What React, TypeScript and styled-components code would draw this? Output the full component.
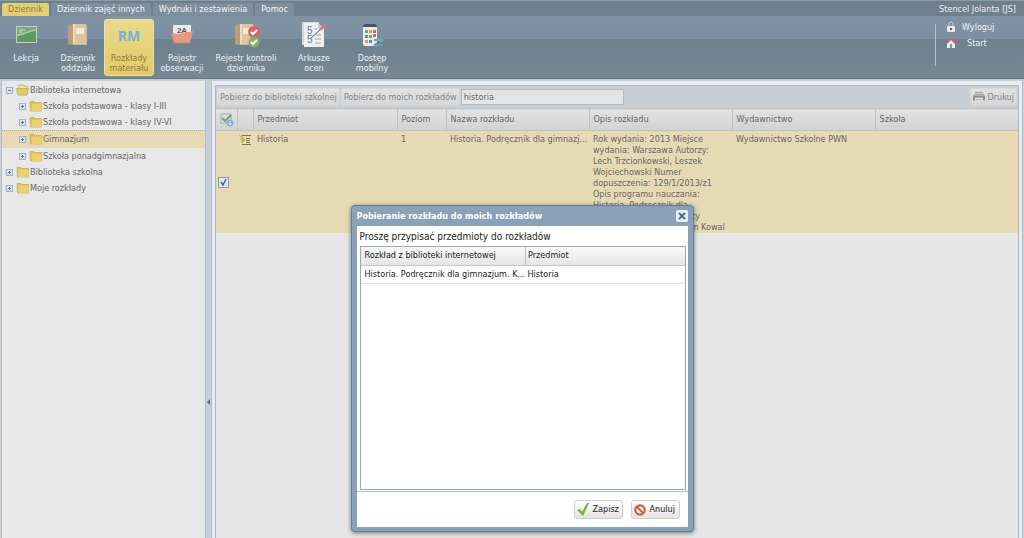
import React from "react";
import styled, { createGlobalStyle, css } from "styled-components";

const uiFont = '"DejaVu Sans Condensed", "DejaVu Sans", Tahoma, sans-serif';

const GlobalStyle = createGlobalStyle`
  * { box-sizing: border-box; }
  body {
    margin: 0;
    background: #c9d0d7;
    color: #666;
    font: 9px/11px ${uiFont};
  }
  button, input { font: inherit; color: inherit; margin: 0; }
  button { border: 0; padding: 0; background: none; cursor: pointer; }
  ul { list-style: none; margin: 0; padding: 0; }
  svg { display: block; flex: none; }
`;

const Page = styled.div`
  display: flex;
  flex-direction: column;
  min-height: 100vh;
`;

/* ---------- top bar ---------- */

const TopBar = styled.div`
  display: flex;
  justify-content: space-between;
  align-items: flex-end;
  height: 16px;
  padding: 0 8px 0 2px;
  background: #6e7f8e;
  border-top: 1px solid #8c9aa8;
  color: #eef1f3;
`;

const Tabs = styled.nav`
  display: flex;
  gap: 2px;
`;

const Tab = styled.button<{ $active?: boolean }>`
  height: 13px;
  padding: 0 6px;
  white-space: nowrap;
  border-radius: 2px 2px 0 0;
  background: ${(p) => (p.$active ? "#e5cf72" : "#7d8f9f")};
  color: ${(p) => (p.$active ? "#8a7c46" : "#f3f5f7")};
`;

const UserName = styled.span`
  line-height: 13px;
`;

const Ribbon = styled.header`
  display: flex;
  justify-content: space-between;
  height: 63px;
  padding: 3px 0 2px;
  background: linear-gradient(#8194a5 0, #7b8fa0 23px, #6e818f 23px, #758894 100%);
  border-bottom: 1px solid #65778a;
  color: #f0f3f5;
`;

const RibbonItems = styled.div`
  display: flex;
`;

const RibbonButton = styled.button<{ $width: number; $active?: boolean }>`
  display: flex;
  flex-direction: column;
  align-items: center;
  justify-content: flex-start;
  gap: 4px;
  width: ${(p) => p.$width}px;
  padding-top: 3px;
  line-height: 10px;
  text-align: center;
  white-space: pre-line;
  border-radius: 3px;
  ${(p) =>
    p.$active &&
    css`
      background: linear-gradient(#ead98c, #e3cb66);
      border: 1px solid #ece0a8;
      color: #8a7c46;
      padding-top: 2px;
    `}
`;

const Session = styled.div`
  display: flex;
  flex-direction: column;
  gap: 4px;
  width: 89px;
  height: 42px;
  margin-top: 5px;
  padding-left: 9px;
  border-left: 1px solid #b7c1ca;
`;

const SessionLink = styled.a<{ $indent?: boolean }>`
  display: flex;
  align-items: center;
  gap: ${(p) => (p.$indent ? 10 : 5)}px;
  height: 12px;
  margin-top: ${(p) => (p.$indent ? 0 : "-3px")};
  color: #f0f3f5;
  text-decoration: none;
`;

/* ---------- body ---------- */

const Main = styled.main`
  display: flex;
  flex: 1;
  border-top: 2px solid #c3ccd3;
  padding: 0 1px;
`;

const Sidebar = styled.aside`
  flex: none;
  width: 205px;
  padding-top: 1px;
  background: #e8e8e8;
  border: solid #b3bdca;
  border-width: 0 1px;
`;

const TreeRow = styled.li<{ $level: number; $selected?: boolean }>`
  display: flex;
  align-items: center;
  gap: 3px;
  height: 16px;
  padding-left: ${(p) => 4 + p.$level * 13}px;
  white-space: nowrap;
  ${(p) =>
    p.$selected &&
    css`
      height: 18px;
      background: #e6dab4;
      border-top: 1px dotted #b5ab8c;
      border-bottom: 1px solid #e6dab4;
    `}
`;

const TreeLabel = styled.span`
  margin-left: -2px;
`;

const Splitter = styled.div`
  flex: none;
  width: 5px;
  padding: 318px 1px 0;
  background: #c6ced9;
`;

const Content = styled.section`
  flex: 1;
  min-width: 0;
  display: flex;
  flex-direction: column;
  padding: 4px 3px 0;
  background: #e8ebef;
  border: solid #b3bdca;
  border-width: 0 1px;
`;

const GridPanel = styled.div`
  flex: 1;
  background: #e6e6e6;
  border: 1px solid #b0b8c0;
  border-bottom: 0;
`;

const Toolbar = styled.div`
  display: flex;
  align-items: center;
  gap: 1px;
  height: 22px;
  padding: 0 1px;
  background: #c7ced5;
`;

const ToolButton = styled.button`
  display: flex;
  align-items: center;
  gap: 3px;
  height: 18px;
  padding: 0 2px;
  white-space: nowrap;
  color: #858585;
  background: linear-gradient(#e2e2e2, #d6d6d6);
  border: 1px solid #d6d9dc;
  border-radius: 2px;
`;

const SearchInput = styled.input`
  width: 163px;
  height: 16px;
  padding: 0 2px;
  background: #e4e4e4;
  border: 1px solid #b5babf;
  border-radius: 0;
  outline: 0;
`;

const Spacer = styled.div`
  flex: 1;
`;

const Table = styled.table`
  width: 100%;
  table-layout: fixed;
  border-collapse: collapse;
`;

const HeadCell = styled.th`
  height: 22px;
  padding: 0 4px;
  font-weight: normal;
  text-align: left;
  white-space: nowrap;
  background: linear-gradient(#e2e2e2, #d2d2d2);
  border: solid #bfc2c5;
  border-width: 1px 0 1px 1px;
  &:first-child { border-left: 0; }
`;

const Cell = styled.td<{ $middle?: boolean; $tight?: boolean }>`
  height: 102px;
  padding: ${(p) => (p.$tight ? "3px 2px" : "3px 0 0 4px")};
  vertical-align: ${(p) => (p.$middle ? "middle" : "top")};
  background: #e6dab4;
`;

const OneLine = styled.div`
  overflow: hidden;
  white-space: nowrap;
  text-overflow: ellipsis;
`;

const Lines = styled.div`
  white-space: pre;
`;

const Check = styled.input`
  appearance: none;
  display: block;
  width: 11px;
  height: 11px;
  background: #e3e6ec;
  border: 1px solid #8d9bb5;
`;

const CheckLabel = styled.label`
  display: grid;
  width: 11px;
  > * { grid-area: 1 / 1; }
`;

/* ---------- dialog ---------- */

const Overlay = styled.div`
  position: absolute;
  inset: 0;
  display: flex;
  justify-content: center;
  align-items: flex-start;
  padding: 205px 0 0 20px;
`;

const Dialog = styled.div`
  width: 343px;
  padding: 0 5px 4px;
  background: #8aa1b7;
  border: 1px solid #60809f;
  border-radius: 4px;
  box-shadow: 0 1px 4px rgba(0, 0, 0, 0.5);
  color: #222;
`;

const DialogTitle = styled.h2`
  display: flex;
  align-items: center;
  justify-content: space-between;
  height: 20px;
  margin: 0;
  padding: 0;
  font-size: 9px;
  line-height: 11px;
  color: #fff;
`;

const CloseButton = styled.button`
  display: flex;
  align-items: center;
  justify-content: center;
  width: 12px;
  height: 12px;
  background: #e9f1fb;
  border-radius: 2px;
`;

const DialogBody = styled.div`
  padding: 4px 2px 1px 3px;
  background: #fff;
`;

const Prompt = styled.p`
  margin: 0 0 2px;
  font-size: 10px;
  line-height: 14px;
`;

const SubjectList = styled.div`
  height: 244px;
  border: 1px solid #9aa9b8;
`;

const SubjectHead = styled.th`
  height: 18px;
  padding: 0 4px;
  font-weight: normal;
  text-align: left;
  white-space: nowrap;
  background: linear-gradient(#f8f8f8, #e6e6e7);
  border-bottom: 1px solid #c5c5c5;
  & + & { border-left: 1px solid #b9bec4; padding-left: 2px; }
`;

const SubjectCell = styled.td`
  height: 18px;
  padding: 0 0 0 4px;
  border-bottom: 1px solid #dedede;
  & + & { padding-left: 2px; }
`;

const DialogFooter = styled.div`
  display: flex;
  justify-content: flex-end;
  gap: 8px;
  height: 36px;
  padding: 8px 8px 0;
  background: #fff;
  border-top: 1px solid #b4c2d0;
`;

const DialogButton = styled.button`
  display: flex;
  align-items: center;
  gap: 4px;
  width: 49px;
  height: 19px;
  padding: 0 2px;
  background: linear-gradient(#fff, #e3e3e3);
  border: 1px solid #cfcfcf;
  border-radius: 3px;
`;

/* ---------- icons ---------- */

const BoardIcon = () => (
  <svg width="26" height="27" viewBox="0 0 26 27">
    <rect x="3" y="4" width="21" height="17" fill="#c9cdc9" />
    <rect x="4" y="5" width="19" height="15" fill="#78aa78" />
    <path d="M4 15c6-1 11-5 19-6v11H4z" fill="#5b9a62" />
    <path d="M4 13c6 0 10-4 19-5" stroke="#a9cf9f" fill="none" strokeWidth="1.500" />
    <path d="M6 8h6M6 10h3" stroke="#cfe0cd" />
  </svg>
);

const Book = () => (
  <>
    <path d="M3 3l5-1v21l-5-1z" fill="#bf9c78" />
    <rect x="8" y="2" width="13" height="21" fill="#dcc6a0" />
    <path d="M8 2h2v21H8z" fill="#e8dcc2" />
    <path d="M21 3h1v20H8v-1h13z" fill="#c9b394" />
    <rect x="11" y="6" width="8" height="6" fill="#f1ead9" />
  </>
);

const BookIcon = () => (
  <svg width="26" height="27" viewBox="0 0 26 27">
    <Book />
  </svg>
);

const PlanIcon = () => (
  <svg width="26" height="27" viewBox="0 0 26 27">
    <text x="13" y="19" textAnchor="middle" fontFamily="Open Sans, sans-serif" fontWeight="bold" fontSize="14" fill="#74b3d3">
      RM
    </text>
  </svg>
);

const FolderReportIcon = () => (
  <svg width="26" height="27" viewBox="0 0 26 27">
    <path d="M4 3h18v14H4z" fill="#ececec" />
    <text x="13" y="11" textAnchor="middle" fontFamily="Liberation Sans, sans-serif" fontWeight="bold" fontSize="8" fill="#555">
      2A
    </text>
    <path d="M2 12l2-1 5 1 5-1 10-2-3 12H5z" fill="#e89a80" />
    <path d="M2 12l3 9h15" fill="none" stroke="#d07a62" />
  </svg>
);

const ControlIcon = () => (
  <svg width="28" height="27" viewBox="0 0 28 27">
    <Book />
    <circle cx="22" cy="10" r="6" fill="#d9636a" />
    <path d="M19 10l2 2 4-4" stroke="#fff" strokeWidth="2" fill="none" />
    <circle cx="22" cy="20" r="5.500" fill="#7fb35c" />
    <path d="M19 20l2 2 4-4" stroke="#fff" strokeWidth="2" fill="none" />
  </svg>
);

const SheetIcon = () => (
  <svg width="28" height="27" viewBox="0 0 28 27">
    <path d="M2 0h17v23H2z" fill="#d6d9dc" />
    <path d="M4 1h14l6 6v18H4z" fill="#eef0f1" />
    <path d="M18 1v6h6" fill="#c9ced3" />
    <g fontFamily="Liberation Sans, sans-serif" fontSize="10" fill="#5a79a8">
      <text x="7" y="12">5</text>
      <text x="7" y="21">5</text>
    </g>
    <path d="M14 7h3M16 13h5M15 17h6M15 21h6" stroke="#a4abb1" />
    <path d="M11 16l10-9" stroke="#555" />
    <path d="M19 7l6-6 2 1-6 7z" fill="#cf7a82" />
  </svg>
);

const MobileIcon = () => (
  <svg width="26" height="27" viewBox="0 0 26 27">
    <rect x="4" y="2" width="14" height="22" rx="2" fill="#e9ebed" />
    <path d="M4 4q0-2 2-2h10q2 0 2 2v1H4z" fill="#4b5560" />
    <path d="M6 8h3v3H6zM10 13h3v3h-3z" fill="#7fa85d" />
    <path d="M10 8h3v3h-3zM6 18h3v3H6z" fill="#d3a24f" />
    <path d="M14 8h3v3h-3zM14 12h3v3h-3z" fill="#cb6868" />
    <path d="M6 13h3v3H6zM10 18h3v3h-3z" fill="#5f8fc0" />
    <path d="M15 17h6v-2l4 3-4 3v-2h-6z" fill="#63b79c" />
    <path d="M24 24h-6v1l-4-2 4-3v2h6z" fill="#7398c6" />
  </svg>
);

const LockIcon = () => (
  <svg width="12" height="12" viewBox="0 0 12 12">
    <path d="M4 6V3q0-2 2-2t2 2v3" fill="none" stroke="#c6ccd1" />
    <rect x="2" y="5" width="8" height="6" rx="1" fill="#e5e8ea" />
    <path d="M6 7v2" stroke="#54606b" strokeWidth="2" />
  </svg>
);

const HomeIcon = () => (
  <svg width="12" height="12" viewBox="0 0 12 12">
    <path d="M8 1h2v4H8z" fill="#cf5f62" />
    <path d="M2 6l4-4 4 4v5H2z" fill="#eceef0" />
    <path d="M1 7l5-5 5 5" fill="none" stroke="#cf5f62" strokeWidth="1.500" />
    <path d="M5 7h2v4H5z" fill="#8b949c" />
  </svg>
);

const Expander = ({ open }: { open?: boolean }) => (
  <svg width="7" height="7" viewBox="0 0 7 7">
    <rect x=".5" y=".5" width="6" height="6" fill="#dfe4ec" stroke="#a3afc3" />
    <path d={open ? "M2 3.500h3" : "M2 3.500h3M3.500 2v3"} stroke="#5f7194" />
  </svg>
);

const FolderIcon = ({ open }: { open?: boolean }) => (
  <svg width="13" height="12" viewBox="0 0 13 12">
    {open ? (
      <>
        <path d="M3 1h4l1 1h3v4H3z" fill="#f0e6bb" stroke="#b69d4a" strokeWidth=".7" />
        <path d="M.5 4.500h12l-1.500 6.500H2z" fill="#e6cb60" stroke="#b69d4a" strokeWidth=".7" />
      </>
    ) : (
      <>
        <path d="M1 1.500h4l1 1h6.500v8.500H1.500z" fill="#dcc05a" stroke="#c3a955" strokeWidth=".7" />
        <path d="M2.500 3.500H12.500V11H2.500z" fill="#ead26f" />
      </>
    )}
  </svg>
);

const SelectAllIcon = () => (
  <svg width="14" height="14" viewBox="0 0 14 14">
    <rect x="1" y="1" width="10" height="9" fill="#dde3dc" stroke="#a3b0a8" />
    <path d="M2 5l3 3 6-6" fill="none" stroke="#6fa566" strokeWidth="2" />
    <circle cx="10" cy="10" r="3.500" fill="#7fb2cf" />
    <path d="M10 8v3M8.500 10l1.500 2 1.500-2" stroke="#e8eef2" fill="none" />
  </svg>
);

const DetailsIcon = () => (
  <svg width="12" height="12" viewBox="0 0 12 12">
    <path d="M3 1.500h9M7 4.500h4M7 6.500h4M7 8.500h4M3 10.500h9" stroke="#77745e" />
    <path d="M0 1l3 3v-2M1 5h2V3l3 3-3 3V7" fill="#d5a945" stroke="#d5a945" strokeWidth=".7" />
  </svg>
);

const PrinterIcon = () => (
  <svg width="12" height="12" viewBox="0 0 12 12">
    <path d="M2 1.500h8M1 3.500h10" stroke="#9d9d9d" />
    <path d="M0 4.500h12v5h-2v-3H2v3H0z" fill="#8d8d8d" />
    <path d="M3 8.500h6" stroke="#bcbcbc" />
  </svg>
);

const TickIcon = () => (
  <svg width="12" height="13" viewBox="0 0 12 13">
    <path d="M0 7l3-1 2 3 5-9 2 0-6 13z" fill="#6fb536" />
  </svg>
);

const CancelIcon = () => (
  <svg width="12" height="12" viewBox="0 0 12 12">
    <circle cx="6" cy="6" r="4.700" fill="#fff" stroke="#d65a34" strokeWidth="2.200" />
    <path d="M3 3l6 6" stroke="#d65a34" strokeWidth="2" />
  </svg>
);

const RowTick = () => (
  <svg width="11" height="11" viewBox="0 0 11 11">
    <path d="M3 5l2 3 3-6" fill="none" stroke="#4c5f9b" strokeWidth="1.500" />
  </svg>
);

const CollapseArrow = () => (
  <svg width="3" height="6" viewBox="0 0 3 6">
    <path d="M3 0v6L0 3z" fill="#666d76" />
  </svg>
);

const CrossIcon = () => (
  <svg width="8" height="8" viewBox="0 0 8 8">
    <path d="M1 1l6 6M7 1L1 7" stroke="#456a9e" strokeWidth="2" />
  </svg>
);

/* ---------- data ---------- */

const tabs = ["Dziennik", "Dziennik zajęć innych", "Wydruki i zestawienia", "Pomoc"];

const ribbon = [
  { label: "Lekcja", width: 52, icon: <BoardIcon /> },
  { label: "Dziennik\noddziału", width: 52, icon: <BookIcon /> },
  { label: "Rozkłady\nmateriału", width: 50, icon: <PlanIcon />, active: true },
  { label: "Rejestr\nobserwacji", width: 56, icon: <FolderReportIcon /> },
  { label: "Rejestr kontroli\ndziennika", width: 72, icon: <ControlIcon /> },
  { label: "Arkusze\nocen", width: 64, icon: <SheetIcon /> },
  { label: "Dostęp\nmobilny", width: 52, icon: <MobileIcon /> },
];

const tree = [
  { label: "Biblioteka internetowa", level: 0, open: true },
  { label: "Szkoła podstawowa - klasy I-III", level: 1 },
  { label: "Szkoła podstawowa - klasy IV-VI", level: 1 },
  { label: "Gimnazjum", level: 1, selected: true },
  { label: "Szkoła ponadgimnazjalna", level: 1 },
  { label: "Biblioteka szkolna", level: 0 },
  { label: "Moje rozkłady", level: 0 },
];

const description = [
  "Rok wydania: 2013 Miejsce",
  "wydania: Warszawa Autorzy:",
  "Lech Trzcionkowski, Leszek",
  "Wojciechowski Numer",
  "dopuszczenia: 129/1/2013/z1",
  "Opis programu nauczania:",
  "Historia. Podręcznik dla",
  "gimnazjum. Kl.: 1, Autorzy",
  "programu: Marta, Joachim Kowal",
].join("\n");

const columns = [21, 16, 144, 49, 143, 143, 143, undefined];

export default function App() {
  return (
    <Page>
      <GlobalStyle />
      <TopBar>
        <Tabs>
          {tabs.map((t, i) => (
            <Tab key={t} $active={i === 0}>{t}</Tab>
          ))}
        </Tabs>
        <UserName>Stencel Jolanta [JS]</UserName>
      </TopBar>
      <Ribbon>
        <RibbonItems>
          {ribbon.map((r) => (
            <RibbonButton key={r.label} $width={r.width} $active={r.active}>
              {r.icon}
              <span>{r.label}</span>
            </RibbonButton>
          ))}
        </RibbonItems>
        <Session>
          <SessionLink href="#logout"><LockIcon />Wyloguj</SessionLink>
          <SessionLink href="#start" $indent><HomeIcon />Start</SessionLink>
        </Session>
      </Ribbon>

      <Main>
        <Sidebar>
          <ul>
            {tree.map((n) => (
              <TreeRow key={n.label} $level={n.level} $selected={n.selected}>
                <Expander open={n.open} />
                <FolderIcon open={n.open} />
                <TreeLabel>{n.label}</TreeLabel>
              </TreeRow>
            ))}
          </ul>
        </Sidebar>
        <Splitter><CollapseArrow /></Splitter>
        <Content>
          <GridPanel>
            <Toolbar>
              <ToolButton>Pobierz do biblioteki szkolnej</ToolButton>
              <ToolButton>Pobierz do moich rozkładów</ToolButton>
              <SearchInput aria-label="Szukaj" defaultValue="historia" />
              <Spacer />
              <ToolButton><PrinterIcon />Drukuj</ToolButton>
            </Toolbar>
            <Table>
              <colgroup>
                {columns.map((w, i) => <col key={i} width={w} />)}
              </colgroup>
              <thead>
                <tr>
                  <HeadCell><SelectAllIcon /></HeadCell>
                  <HeadCell />
                  <HeadCell>Przedmiot</HeadCell>
                  <HeadCell>Poziom</HeadCell>
                  <HeadCell>Nazwa rozkładu</HeadCell>
                  <HeadCell>Opis rozkładu</HeadCell>
                  <HeadCell>Wydawnictwo</HeadCell>
                  <HeadCell>Szkoła</HeadCell>
                </tr>
              </thead>
              <tbody>
                <tr>
                  <Cell $middle $tight>
                    <CheckLabel aria-label="Wybierz rozkład">
                      <Check type="checkbox" defaultChecked />
                      <RowTick />
                    </CheckLabel>
                  </Cell>
                  <Cell $tight><DetailsIcon /></Cell>
                  <Cell>Historia</Cell>
                  <Cell>1</Cell>
                  <Cell><OneLine>Historia. Podręcznik dla gimnazj...</OneLine></Cell>
                  <Cell><Lines>{description}</Lines></Cell>
                  <Cell>Wydawnictwo Szkolne PWN</Cell>
                  <Cell />
                </tr>
              </tbody>
            </Table>
          </GridPanel>
        </Content>
      </Main>

      <Overlay>
        <Dialog role="dialog" aria-labelledby="dialog-title">
          <DialogTitle>
            <span id="dialog-title">Pobieranie rozkładu do moich rozkładów</span>
            <CloseButton aria-label="Zamknij"><CrossIcon /></CloseButton>
          </DialogTitle>
          <DialogBody>
            <Prompt>Proszę przypisać przedmioty do rozkładów</Prompt>
            <SubjectList>
              <Table>
                <colgroup>
                  <col width={165} />
                  <col />
                </colgroup>
                <thead>
                  <tr>
                    <SubjectHead>Rozkład z biblioteki internetowej</SubjectHead>
                    <SubjectHead>Przedmiot</SubjectHead>
                  </tr>
                </thead>
                <tbody>
                  <tr>
                    <SubjectCell><OneLine>Historia. Podręcznik dla gimnazjum. K...</OneLine></SubjectCell>
                    <SubjectCell>Historia</SubjectCell>
                  </tr>
                </tbody>
              </Table>
            </SubjectList>
          </DialogBody>
          <DialogFooter>
            <DialogButton><TickIcon />Zapisz</DialogButton>
            <DialogButton><CancelIcon />Anuluj</DialogButton>
          </DialogFooter>
        </Dialog>
      </Overlay>
    </Page>
  );
}
